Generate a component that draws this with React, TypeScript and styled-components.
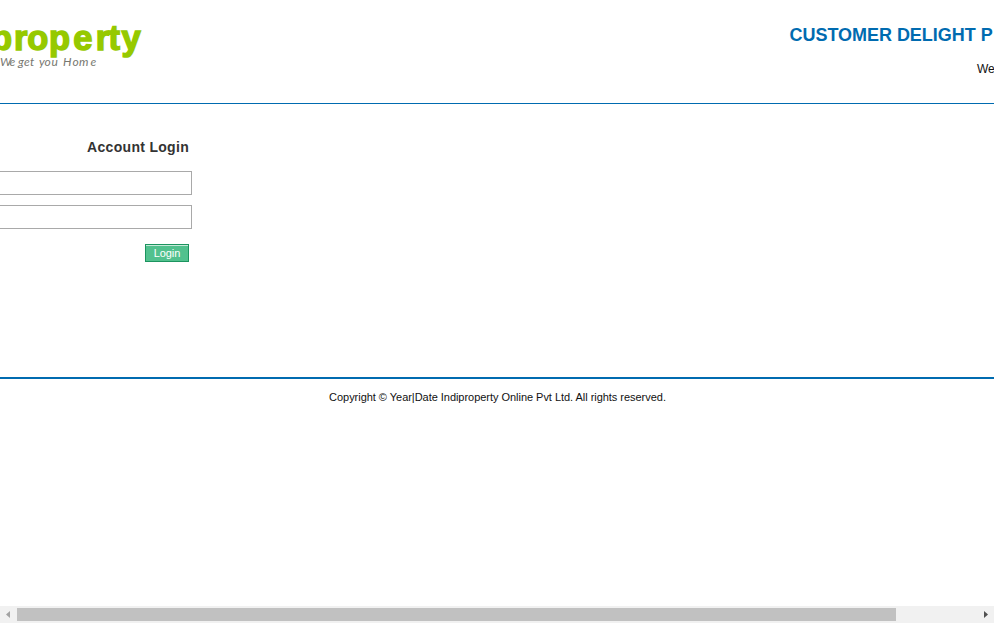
import React from "react";
import styled, { createGlobalStyle } from "styled-components";

const GlobalStyle = createGlobalStyle`
  * { box-sizing: border-box; }
  body {
    margin: 0;
    background: #fff;
    font-family: "Liberation Sans", Arial, sans-serif;
    overflow: hidden;
  }
`;

const Page = styled.div`
  display: flex;
  flex-direction: column;
  width: 100%;
  height: 100vh;
  overflow: hidden;
`;

const Header = styled.header`
  display: flex;
  justify-content: space-between;
  height: 104px;
  border-bottom: 1px solid #006bb0;
`;

const Logo = styled.svg`
  display: block;
  width: 160px;
  height: 80px;
`;

const HeaderText = styled.div`
  display: flex;
  flex-direction: column;
  align-items: flex-end;
  padding-top: 25px;
  white-space: nowrap;
`;

const Title = styled.h1`
  margin: 0;
  width: 204.5px;
  font-size: 18px;
  line-height: 21px;
  letter-spacing: -0.03px;
  color: #006bb0;
`;

const Welcome = styled.span`
  width: 17px;
  margin-top: 16px;
  font-size: 12px;
  line-height: 15px;
  color: #111;
`;

const LoginForm = styled.form`
  display: flex;
  flex-direction: column;
  align-items: flex-end;
  width: 192px;
  height: 273px;
  padding-top: 35px;
`;

const FormTitle = styled.h2`
  margin: 0 3px 15px 0;
  font-size: 14px;
  line-height: 17px;
  letter-spacing: 0.3px;
  color: #333;
`;

const Field = styled.input`
  width: 100%;
  height: 24px;
  margin: 0 0 10px;
  border: 1px solid #a9a9a9;
  border-left: 0;
  border-radius: 0;
  background: #fff;
  outline: none;
`;

const LoginButton = styled.button`
  width: 44px;
  height: 18px;
  margin: 5px 3px 0 0;
  padding: 0;
  border: 1px solid #1c945f;
  box-shadow: inset 0 1px 0 #c5ead9;
  background: #52c18e;
  font: 11px/16px "Liberation Sans", Arial, sans-serif;
  letter-spacing: -0.1px;
  color: #fff;
`;

const Footer = styled.footer`
  flex: 1;
  padding: 11px 0 0 1px;
  border-top: 2px solid #006bb0;
  font-size: 11px;
  line-height: 15px;
  letter-spacing: -0.035px;
  text-align: center;
  color: #111;
`;

const Scrollbar = styled.div`
  display: grid;
  grid-template-columns: 17px 1fr 17px;
  align-items: center;
  height: 17px;
  background: #f1f1f1;
`;

const Thumb = styled.div`
  width: 879px;
  height: 13px;
  background: #c1c1c1;
`;

const Arrow = styled.svg`
  display: block;
  width: 17px;
  height: 17px;
`;

export default function App() {
  return (
    <Page>
      <GlobalStyle />
      <Header>
        <Logo viewBox="0 0 160 80" role="img" aria-label="property">
          <text
            x="-9 14 27.2 49 73.3 95.8 108.4 121.5"
            y="49.7"
            fontFamily="Liberation Sans, Arial, sans-serif"
            fontWeight="700"
            fontSize="34.5"
            fill="#96c900"
            stroke="#96c900"
            strokeWidth="1.5"
          >
            property
          </text>
          <text
            x="0 9.5 15 18 24 30 34 39 44.5 51.5 58 63 72.5 79 90.5"
            y="66"
            fontFamily="Lato, sans-serif"
            fontStyle="italic"
            fontWeight="400"
            fontSize="12"
            fill="#777770"
          >
            We get you Home
          </text>
        </Logo>
        <HeaderText>
          <Title>CUSTOMER DELIGHT P</Title>
          <Welcome>We</Welcome>
        </HeaderText>
      </Header>
      <LoginForm onSubmit={(e) => e.preventDefault()}>
        <FormTitle>Account Login</FormTitle>
        <Field type="text" aria-label="Username" />
        <Field type="password" aria-label="Password" />
        <LoginButton type="submit">Login</LoginButton>
      </LoginForm>
      <Footer>
        Copyright © Year|Date Indiproperty Online Pvt Ltd. All rights reserved.
      </Footer>
      <Scrollbar>
        <Arrow viewBox="0 0 17 17">
          <path d="M10 5v7L6 8.5z" fill="#a3a3a3" />
        </Arrow>
        <Thumb />
        <Arrow viewBox="0 0 17 17">
          <path d="M7 5v7l4-3.5z" fill="#505050" />
        </Arrow>
      </Scrollbar>
    </Page>
  );
}
